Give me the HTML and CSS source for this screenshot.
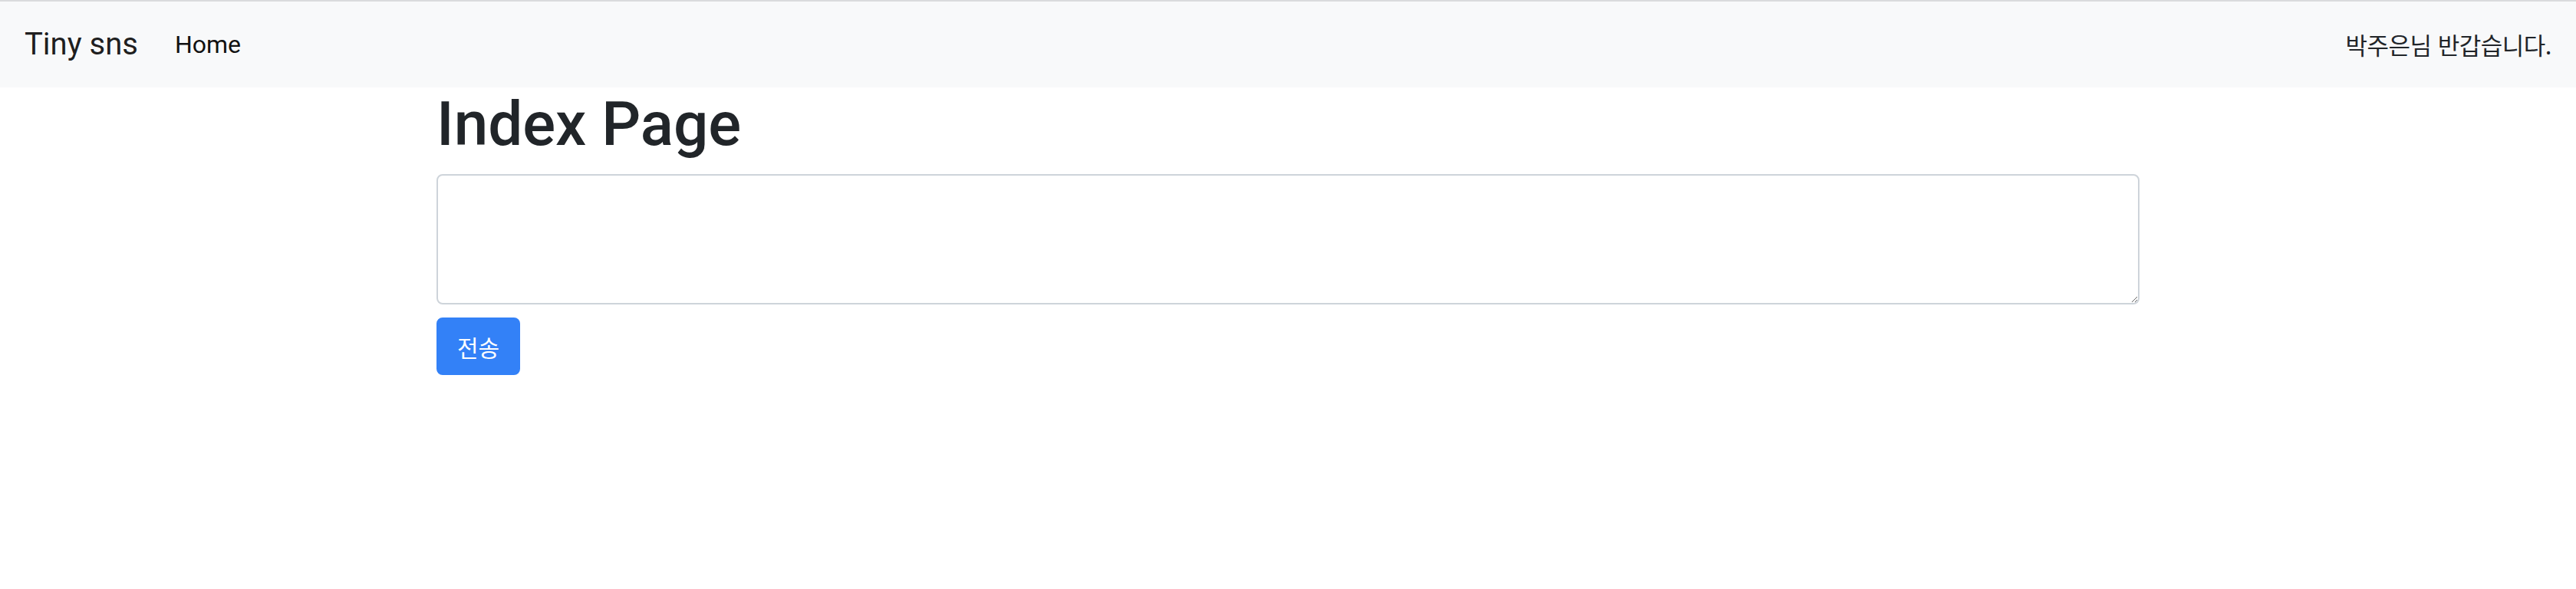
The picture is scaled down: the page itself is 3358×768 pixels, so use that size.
FILE: index.html
```html
<!DOCTYPE html>
<html lang="ko">
<head>
<meta charset="utf-8">
<title>Tiny sns</title>
<link rel="stylesheet" href="styles.css">
</head>
<body>
<nav class="navbar">
  <a class="brand" href="#">Tiny sns</a>
  <ul class="nav">
    <li><a class="nav-link" href="#">Home</a></li>
  </ul>
  <span class="greeting">박주은님 반갑습니다.</span>
</nav>
<main class="container">
  <h1 class="title">Index Page</h1>
  <form class="post-form">
    <textarea class="form-control" rows="3"></textarea>
    <button type="button" class="btn">전송</button>
  </form>
</main>
</body>
</html>
```

FILE: styles.css
```css
* { box-sizing: border-box; }
html, body { margin: 0; padding: 0; }
body {
  font-family: Roboto, "Noto Sans CJK KR", "Noto Sans", sans-serif;
  color: #212529;
  background: #fff;
  border-top: 2px solid #dadbdd;
}
.navbar {
  display: flex;
  align-items: center;
  height: 112px;
  padding: 0 32px;
  background: #f8f9fa;
}
.brand {
  font-size: 40px;
  line-height: 60px;
  padding: 10px 0;
  margin-right: 32px;
  color: rgba(0,0,0,.9);
  text-decoration: none;
  white-space: nowrap;
}
.nav {
  display: flex;
  list-style: none;
  margin: 0;
  padding: 0;
  flex: 1;
}
.nav-link {
  display: block;
  padding: 16px 16px;
  font-size: 32px;
  line-height: 48px;
  color: #111;
  text-decoration: none;
}
.greeting {
  font-family: "Noto Sans CJK KR", sans-serif;
  font-size: 31px;
  line-height: 48px;
  color: #212529;
  letter-spacing: -0.5px;
}
.container {
  width: 2280px;
  margin: 0 auto;
  padding: 0 30px;
}
.title {
  margin: 0 0 17px;
  font-size: 80px;
  font-weight: 500;
  line-height: 96px;
  color: #212529;
}
.post-form {
  display: flex;
  flex-direction: column;
  align-items: flex-start;
  gap: 17px;
}
.form-control {
  display: block;
  width: 100%;
  height: 170px;
  padding: 12px 24px;
  font-size: 32px;
  line-height: 48px;
  border: 2px solid #ced4da;
  border-radius: 8px;
  background: #fff;
  resize: vertical;
  font-family: inherit;
}
.btn {
  display: inline-block;
  height: 75px;
  padding: 0 25px;
  font-family: "Noto Sans CJK KR", sans-serif;
  font-size: 30px;
  line-height: 48px;
  color: #fff;
  background: #3381f7;
  border: 2px solid #3381f7;
  border-radius: 8px;
  cursor: pointer;
}
```
